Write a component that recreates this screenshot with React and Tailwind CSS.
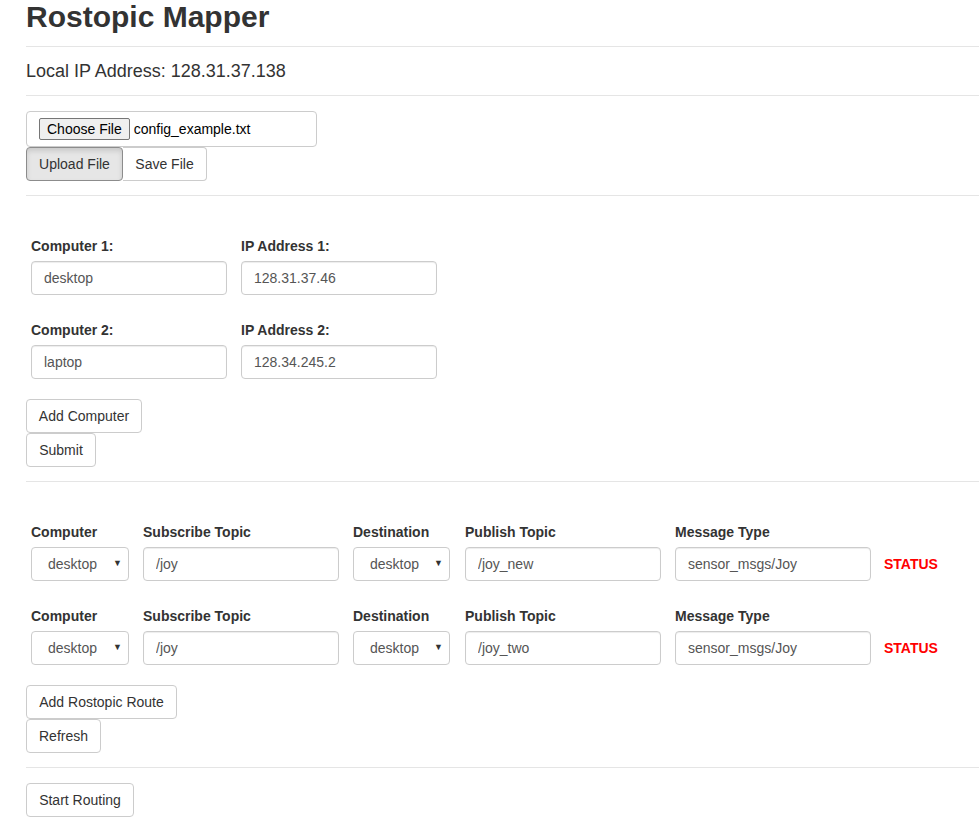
import React from 'react';

const FONT = { fontFamily: '"Liberation Sans", Arial, Helvetica, sans-serif' };

const inputCls =
  'h-[34px] w-[196px] rounded-[4px] border border-[#ccc] bg-white px-3 text-sm text-[#555] shadow-[inset_0_1px_1px_rgba(0,0,0,0.075)] outline-none';
const btnCls =
  'h-[34px] whitespace-nowrap rounded-[4px] border border-[#ccc] bg-white px-0 text-center text-sm text-[#333] leading-5';

const Hr = ({ className = '' }) => <div className={`h-px w-full bg-[#e5e5e5] ${className}`} />;

const Field = ({ label, value, className = '' }) => (
  <div className={`flex flex-col ${className}`}>
    <label className="mb-[5px] h-5 text-sm font-bold leading-5 text-[#333]">{label}</label>
    <input className={inputCls} defaultValue={value} />
  </div>
);

const Select = ({ label, value, width, className = '' }) => (
  <div className={`flex flex-col ${className}`}>
    <label className="mb-[5px] h-5 text-sm font-bold leading-5 text-[#333]">{label}</label>
    <div
      className={`relative flex h-[34px] items-center rounded-[4px] border border-[#ccc] bg-white pl-4 text-sm text-[#555] ${width}`}
    >
      {value}
      <span className="absolute right-[6px] top-[9px] text-[9px] text-[#333]">▼</span>
    </div>
  </div>
);

const routes = [
  { sub: '/joy', pub: '/joy_new', type: 'sensor_msgs/Joy' },
  { sub: '/joy', pub: '/joy_two', type: 'sensor_msgs/Joy' },
];

const computers = [
  { name: 'desktop', ip: '128.31.37.46' },
  { name: 'laptop', ip: '128.34.245.2' },
];

export default function App() {
  return (
    <div className="min-h-screen overflow-hidden bg-white pl-[26px] text-[#333]" style={FONT}>
      <h2 className="h-[33px] text-[30px] font-bold leading-[33px]">Rostopic Mapper</h2>
      <Hr className="mt-[13px]" />
      <div className="flex h-12 items-center text-lg">Local IP Address: 128.31.37.138</div>
      <Hr />

      {/* file upload */}
      <div className="mt-[15px] flex h-9 w-[291px] items-center rounded-[4px] border border-[#ccc] pl-3">
        <button className="h-[22px] rounded-[2px] border border-[#767676] bg-[#efefef] px-[7px] text-sm leading-4 text-black">
          Choose File
        </button>
        <span className="ml-[4px] text-sm text-black">config_example.txt</span>
      </div>
      <div className="flex">
        <button className="h-[34px] w-[97px] rounded-[4px] border border-[#8c8c8c] bg-[#e6e6e6] text-sm text-[#333] shadow-[inset_0_3px_5px_rgba(0,0,0,0.125)]">
          Upload File
        </button>
        <button className="h-[34px] w-[84px] rounded-r-[4px] border border-l-0 border-[#ccc] bg-white text-sm text-[#333]">
          Save File
        </button>
      </div>
      <Hr className="mt-[14px]" />

      {/* computers */}
      <div className="mt-10 flex flex-col gap-[25px] pl-[5px]">
        {computers.map((c, i) => (
          <div key={i} className="flex gap-[14px]">
            <Field label={`Computer ${i + 1}:`} value={c.name} />
            <Field label={`IP Address ${i + 1}:`} value={c.ip} />
          </div>
        ))}
      </div>
      <div className="mt-5 flex flex-col items-start">
        <button className={`${btnCls} w-[116px]`}>Add Computer</button>
        <button className={`${btnCls} w-[70px]`}>Submit</button>
      </div>
      <Hr className="mt-[14px]" />

      {/* routes */}
      <div className="mt-10 flex flex-col gap-[25px] pl-[5px]">
        {routes.map((r, i) => (
          <div key={i} className="flex items-end">
            <Select label="Computer" value="desktop" width="w-[98px]" />
            <Field label="Subscribe Topic" value={r.sub} className="ml-[14px]" />
            <Select label="Destination" value="desktop" width="w-[97px]" className="ml-[14px]" />
            <Field label="Publish Topic" value={r.pub} className="ml-[15px]" />
            <Field label="Message Type" value={r.type} className="ml-[14px]" />
            <span className="ml-[13px] flex h-[34px] items-center text-sm font-bold text-[#ff0000]">STATUS</span>
          </div>
        ))}
      </div>
      <div className="mt-5 flex flex-col items-start">
        <button className={`${btnCls} w-[151px]`}>Add Rostopic Route</button>
        <button className={`${btnCls} w-[75px]`}>Refresh</button>
      </div>
      <Hr className="mt-[14px]" />
      <button className={`${btnCls} mt-[15px] w-[108px]`}>Start Routing</button>
    </div>
  );
}
